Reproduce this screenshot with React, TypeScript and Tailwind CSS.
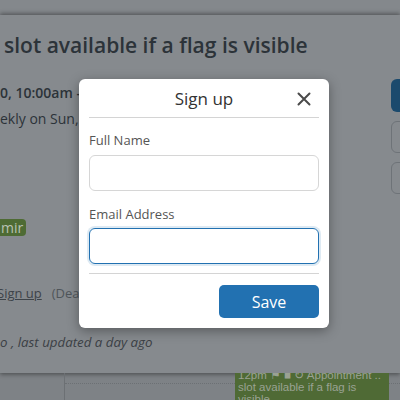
import React from "react";

export default function App() {
  return (
    <div
      className="relative w-[400px] h-[400px] overflow-hidden bg-[#7e8286]"
      style={{ fontFamily: '"Open Sans", "Noto Sans", sans-serif' }}
    >
      {/* page behind */}
      <div className="h-[15px] bg-[#84888c]" />
      {/* first modal (dimmed) */}
      <div className="relative h-[358px] bg-[#868a8e] shadow-[0_-2px_4px_rgba(0,0,0,0.3),0_2px_4px_rgba(0,0,0,0.3)] flex">
        <div className="flex-1 flex flex-col text-[#2c3339]">
          <div className="mt-[15px] pl-[4px] text-[21px] leading-[30px] font-semibold whitespace-nowrap">
            slot available if a flag is visible
          </div>
          <div className="mt-[23px] text-[14px] leading-[20px] font-semibold whitespace-nowrap">
            0, 10:00am - 11:00am
          </div>
          <div className="mt-[6px] text-[14px] leading-[20px] whitespace-nowrap">
            ekly on Sun, Mon
          </div>
          <div className="mt-[90px] flex">
            <span className="bg-[#4e6b34] text-[#b9c2b3] text-[14px] leading-[17px] pl-[1px] pr-[3px] rounded-r-[4px]">
              mir
            </span>
          </div>
          <div className="mt-[47px] ml-[-3px] flex gap-[10px] text-[13px] leading-[20px] whitespace-nowrap">
            <span className="underline text-[#3d4349]">Sign up</span>
            <span className="text-[#4f555a]">(Deadline)</span>
          </div>
          <div className="mt-[29px] text-[13.3px] leading-[20px] italic text-[#3b4045] whitespace-nowrap">
            o , last updated a day ago
          </div>
        </div>
        <div className="flex flex-col gap-[9px] mt-[64px] mr-[-51px] w-[60px]">
          <div className="h-[33px] rounded-[6px] bg-[#1b4a6d]" />
          <div className="h-[32px] rounded-[6px] border border-[#6e7378]" />
          <div className="h-[32px] rounded-[6px] border border-[#6e7378]" />
        </div>
      </div>
      {/* calendar behind */}
      <div className="relative h-[27px] flex">
        <div className="w-[65px] border-r border-[#6c7074]" />
        <div className="w-[170px] border-t border-dotted border-[#6c7074] mt-[10px]" />
        <div
          className="w-[154px] bg-[#4f6a35] text-[#9aa293] text-[11.5px] leading-[12px] px-[3px] pt-[2px] overflow-hidden"
          style={{ fontFamily: '"Liberation Sans", Arial, sans-serif' }}
        >
          <div className="mt-[-6px] whitespace-nowrap">12pm ⚑ ■ ↻ Appointment ..</div>
          <div className="whitespace-nowrap">slot available if a flag is</div>
          <div>visible</div>
        </div>
        <div className="flex-1 border-t border-dotted border-[#6c7074] mt-[10px]" />
      </div>

      {/* sign up modal */}
      <div className="absolute left-[79px] top-[79px] w-[250px] h-[249px] bg-white rounded-[6px] shadow-[0_3px_12px_rgba(0,0,0,0.35)] flex flex-col px-[10px]">
        <div className="relative h-[39px] flex items-center justify-center border-b border-[#d4d4d4]">
          <span className="text-[17px] text-[#333] mt-[1px]">Sign up</span>
          <svg
            className="absolute right-[8px] top-[13px]"
            width="14"
            height="14"
            viewBox="0 0 14 14"
          >
            <path d="M1.5 1.5 L12.5 12.5 M12.5 1.5 L1.5 12.5" stroke="#4a4a4a" strokeWidth="2" strokeLinecap="round" />
          </svg>
        </div>
        <label className="mt-[13px] text-[13px] leading-[18px] text-[#555]">Full Name</label>
        <div className="mt-[6px] h-[36px] rounded-[6px] border border-[#d6d6d6]" />
        <label className="mt-[14px] text-[13px] leading-[18px] text-[#555]">Email Address</label>
        <div className="mt-[5px] h-[36px] rounded-[6px] border border-[#2271b1] shadow-[0_0_0_2px_rgba(34,113,177,0.15)]" />
        <div className="mt-[9px] border-t border-[#d4d4d4]" />
        <div className="mt-[11px] flex justify-end">
          <div className="w-[100px] h-[33px] rounded-[5px] bg-[#2271b1] text-white text-[16px] flex items-center justify-center">
            Save
          </div>
        </div>
      </div>
    </div>
  );
}
